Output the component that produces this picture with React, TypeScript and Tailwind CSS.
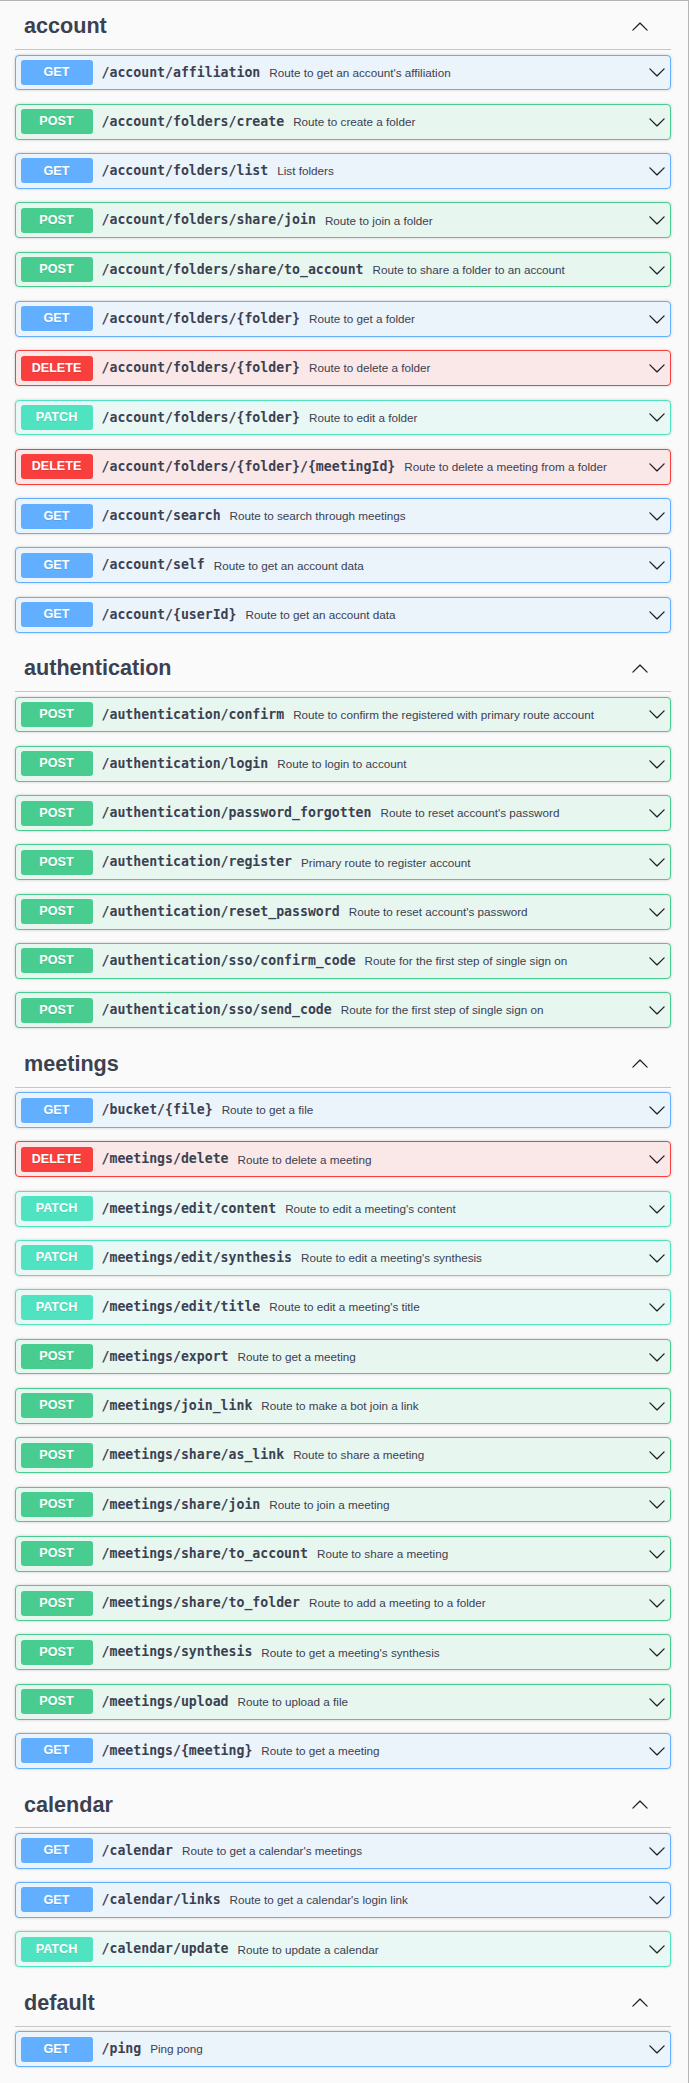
import React from 'react';

type Method = 'GET' | 'POST' | 'DELETE' | 'PATCH';

interface Operation {
  method: Method;
  path: string;
  summary: string;
}

interface Tag {
  name: string;
  operations: Operation[];
}

const methodStyles: Record<Method, { block: string; badge: string }> = {
  GET: { block: 'bg-[#ebf3fb] border-[#61affe]', badge: 'bg-[#61affe]' },
  POST: { block: 'bg-[#e8f6f0] border-[#49cc90]', badge: 'bg-[#49cc90]' },
  DELETE: { block: 'bg-[#fae7e7] border-[#f93e3e]', badge: 'bg-[#f93e3e]' },
  PATCH: { block: 'bg-[#e9f8f5] border-[#50e3c2]', badge: 'bg-[#50e3c2]' },
};

const tags: Tag[] = [
  {
    name: 'account',
    operations: [
      { method: 'GET', path: '/account/affiliation', summary: "Route to get an account's affiliation" },
      { method: 'POST', path: '/account/folders/create', summary: 'Route to create a folder' },
      { method: 'GET', path: '/account/folders/list', summary: 'List folders' },
      { method: 'POST', path: '/account/folders/share/join', summary: 'Route to join a folder' },
      { method: 'POST', path: '/account/folders/share/to_account', summary: 'Route to share a folder to an account' },
      { method: 'GET', path: '/account/folders/{folder}', summary: 'Route to get a folder' },
      { method: 'DELETE', path: '/account/folders/{folder}', summary: 'Route to delete a folder' },
      { method: 'PATCH', path: '/account/folders/{folder}', summary: 'Route to edit a folder' },
      { method: 'DELETE', path: '/account/folders/{folder}/{meetingId}', summary: 'Route to delete a meeting from a folder' },
      { method: 'GET', path: '/account/search', summary: 'Route to search through meetings' },
      { method: 'GET', path: '/account/self', summary: 'Route to get an account data' },
      { method: 'GET', path: '/account/{userId}', summary: 'Route to get an account data' },
    ],
  },
  {
    name: 'authentication',
    operations: [
      { method: 'POST', path: '/authentication/confirm', summary: 'Route to confirm the registered with primary route account' },
      { method: 'POST', path: '/authentication/login', summary: 'Route to login to account' },
      { method: 'POST', path: '/authentication/password_forgotten', summary: "Route to reset account's password" },
      { method: 'POST', path: '/authentication/register', summary: 'Primary route to register account' },
      { method: 'POST', path: '/authentication/reset_password', summary: "Route to reset account's password" },
      { method: 'POST', path: '/authentication/sso/confirm_code', summary: 'Route for the first step of single sign on' },
      { method: 'POST', path: '/authentication/sso/send_code', summary: 'Route for the first step of single sign on' },
    ],
  },
  {
    name: 'meetings',
    operations: [
      { method: 'GET', path: '/bucket/{file}', summary: 'Route to get a file' },
      { method: 'DELETE', path: '/meetings/delete', summary: 'Route to delete a meeting' },
      { method: 'PATCH', path: '/meetings/edit/content', summary: "Route to edit a meeting's content" },
      { method: 'PATCH', path: '/meetings/edit/synthesis', summary: "Route to edit a meeting's synthesis" },
      { method: 'PATCH', path: '/meetings/edit/title', summary: "Route to edit a meeting's title" },
      { method: 'POST', path: '/meetings/export', summary: 'Route to get a meeting' },
      { method: 'POST', path: '/meetings/join_link', summary: 'Route to make a bot join a link' },
      { method: 'POST', path: '/meetings/share/as_link', summary: 'Route to share a meeting' },
      { method: 'POST', path: '/meetings/share/join', summary: 'Route to join a meeting' },
      { method: 'POST', path: '/meetings/share/to_account', summary: 'Route to share a meeting' },
      { method: 'POST', path: '/meetings/share/to_folder', summary: 'Route to add a meeting to a folder' },
      { method: 'POST', path: '/meetings/synthesis', summary: "Route to get a meeting's synthesis" },
      { method: 'POST', path: '/meetings/upload', summary: 'Route to upload a file' },
      { method: 'GET', path: '/meetings/{meeting}', summary: 'Route to get a meeting' },
    ],
  },
  {
    name: 'calendar',
    operations: [
      { method: 'GET', path: '/calendar', summary: "Route to get a calendar's meetings" },
      { method: 'GET', path: '/calendar/links', summary: "Route to get a calendar's login link" },
      { method: 'PATCH', path: '/calendar/update', summary: 'Route to update a calendar' },
    ],
  },
  {
    name: 'default',
    operations: [{ method: 'GET', path: '/ping', summary: 'Ping pong' }],
  },
];

function Arrow({ up = false }: { up?: boolean }) {
  return (
    <svg
      width="18"
      height="18"
      viewBox="0 0 20 20"
      className={up ? 'rotate-180 shrink-0' : 'shrink-0'}
      fill="#1f1f1f"
    >
      <path d="M17.418 6.109c.272-.268.709-.268.979 0s.271.701 0 .969l-7.908 7.83c-.27.268-.707.268-.979 0l-7.908-7.83c-.27-.268-.27-.701 0-.969.271-.268.709-.268.979 0L10 13.25l7.418-7.141z" />
    </svg>
  );
}

function OperationRow({ op }: { op: Operation }) {
  const style = methodStyles[op.method];
  return (
    <div
      className={`flex items-center h-[35.8px] mb-[13.5px] px-[4.5px] border rounded-[4px] shadow-[0_0_3px_rgba(0,0,0,0.19)] ${style.block}`}
    >
      <span
        className={`w-[72px] h-[25px] shrink-0 flex items-center justify-center rounded-[3px] text-white font-bold text-[12.6px] [text-shadow:0_1px_0_rgba(0,0,0,0.1)] ${style.badge}`}
        style={{ fontFamily: '"Liberation Sans", Arial, sans-serif' }}
      >
        {op.method}
      </span>
      <span
        className="px-[9px] text-[13.2px] font-bold text-[#3b4151] whitespace-nowrap"
        style={{ fontFamily: '"DejaVu Sans Mono", monospace' }}
      >
        {op.path}
      </span>
      <span
        className="flex-1 text-[11.7px] text-[#3b4151] whitespace-nowrap"
        style={{ fontFamily: '"Liberation Sans", Arial, sans-serif' }}
      >
        {op.summary}
      </span>
      <Arrow />
    </div>
  );
}

function TagSection({ tag }: { tag: Tag }) {
  return (
    <section>
      <div className="flex items-center h-[46px] pl-[9px] pr-[22.5px] border-b border-[#c4c6ca] mb-[4.5px]">
        <h3
          className="flex-1 text-[21.6px] font-bold text-[#3b4151]"
          style={{ fontFamily: '"Liberation Sans", Arial, sans-serif' }}
        >
          {tag.name}
        </h3>
        <Arrow up />
      </div>
      <div>
        {tag.operations.map((op, i) => (
          <OperationRow key={i} op={op} />
        ))}
      </div>
    </section>
  );
}

export default function App() {
  return (
    <div className="min-h-screen bg-[#fafafa] border-t border-r border-[#b5b5b5]">
      <div className="pl-[15px] pr-[17px] pt-[3px]">
        {tags.map((tag) => (
          <TagSection key={tag.name} tag={tag} />
        ))}
      </div>
    </div>
  );
}
